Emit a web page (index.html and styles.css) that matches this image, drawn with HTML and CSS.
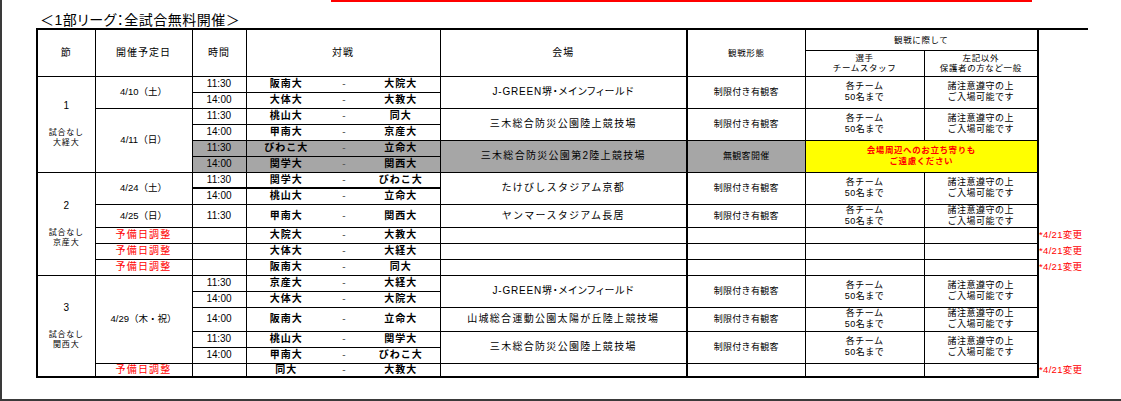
FILE: index.html
```html
<!DOCTYPE html>
<html lang="ja">
<head>
<meta charset="utf-8">
<title>1部リーグ 日程</title>
<link rel="stylesheet" href="styles.css">
</head>
<body>
<div class="page">
  <div class="topline"></div>
  <h1 class="title">＜1部リーグ：全試合無料開催＞</h1>
  <table class="sched">
    <colgroup>
      <col class="k-sec"><col class="k-date"><col class="k-time"><col class="k-t1"><col class="k-dash"><col class="k-t2"><col class="k-venue"><col class="k-view"><col class="k-c7"><col class="k-c8"><col class="k-note">
    </colgroup>
    <thead>
      <tr class="h1">
        <th rowspan="2" class="hd">節</th>
        <th rowspan="2" class="hd">開催予定日</th>
        <th rowspan="2" class="hd">時間</th>
        <th rowspan="2" colspan="3" class="hd">対戦</th>
        <th rowspan="2" class="hd">会場</th>
        <th rowspan="2" class="hs">観戦形態</th>
        <th colspan="2" class="hs">観戦に際して</th>
        <th rowspan="2" class="note"></th>
      </tr>
      <tr class="h2">
        <th class="hs">選手<br>チームスタッフ</th>
        <th class="hs">左記以外<br>保護者の方など一般</th>
      </tr>
    </thead>
    <tbody>
      <tr>
        <td rowspan="6" class="sec"><div class="num">1</div><div class="nog">試合なし<br>大経大</div></td>
        <td rowspan="2" class="date">4/10（土）</td>
        <td class="time">11:30</td><td class="t1">阪南大</td><td class="dash">-</td><td class="t2">大院大</td>
        <td rowspan="2" class="venue jg">J-GREEN堺・メインフィールド</td>
        <td rowspan="2" class="view">制限付き有観客</td>
        <td rowspan="2" class="info">各チーム<br>50名まで</td>
        <td rowspan="2" class="info">諸注意遵守の上<br>ご入場可能です</td>
        <td class="note"></td>
      </tr>
      <tr>
        <td class="time">14:00</td><td class="t1">大体大</td><td class="dash">-</td><td class="t2">大教大</td>
        <td class="note"></td>
      </tr>
      <tr>
        <td rowspan="4" class="date">4/11（日）</td>
        <td class="time">11:30</td><td class="t1">桃山大</td><td class="dash">-</td><td class="t2">同大</td>
        <td rowspan="2" class="venue">三木総合防災公園陸上競技場</td>
        <td rowspan="2" class="view">制限付き有観客</td>
        <td rowspan="2" class="info">各チーム<br>50名まで</td>
        <td rowspan="2" class="info">諸注意遵守の上<br>ご入場可能です</td>
        <td class="note"></td>
      </tr>
      <tr>
        <td class="time">14:00</td><td class="t1">甲南大</td><td class="dash">-</td><td class="t2">京産大</td>
        <td class="note"></td>
      </tr>
      <tr>
        <td class="time g">11:30</td><td class="t1 g">びわこ大</td><td class="dash g">-</td><td class="t2 g">立命大</td>
        <td rowspan="2" class="venue g">三木総合防災公園第2陸上競技場</td>
        <td rowspan="2" class="view g">無観客開催</td>
        <td rowspan="2" colspan="2" class="warn">会場周辺へのお立ち寄りも<br>ご遠慮ください</td>
        <td class="note"></td>
      </tr>
      <tr>
        <td class="time g">14:00</td><td class="t1 g">関学大</td><td class="dash g">-</td><td class="t2 g">関西大</td>
        <td class="note"></td>
      </tr>

      <tr>
        <td rowspan="6" class="sec"><div class="num">2</div><div class="nog">試合なし<br>京産大</div></td>
        <td rowspan="2" class="date">4/24（土）</td>
        <td class="time tb">11:30</td><td class="t1 tb">関学大</td><td class="dash tb">-</td><td class="t2 tb">びわこ大</td>
        <td rowspan="2" class="venue">たけびしスタジアム京都</td>
        <td rowspan="2" class="view">制限付き有観客</td>
        <td rowspan="2" class="info">各チーム<br>50名まで</td>
        <td rowspan="2" class="info">諸注意遵守の上<br>ご入場可能です</td>
        <td class="note"></td>
      </tr>
      <tr>
        <td class="time">14:00</td><td class="t1">桃山大</td><td class="dash">-</td><td class="t2">立命大</td>
        <td class="note"></td>
      </tr>
      <tr class="tall">
        <td class="date">4/25（日）</td>
        <td class="time">11:30</td><td class="t1">甲南大</td><td class="dash">-</td><td class="t2">関西大</td>
        <td class="venue">ヤンマースタジアム長居</td>
        <td class="view">制限付き有観客</td>
        <td class="info">各チーム<br>50名まで</td>
        <td class="info">諸注意遵守の上<br>ご入場可能です</td>
        <td class="note"></td>
      </tr>
      <tr>
        <td class="date red">予備日調整</td>
        <td class="time"></td><td class="t1">大院大</td><td class="dash">-</td><td class="t2">大教大</td>
        <td class="venue"></td><td class="view"></td><td class="info"></td><td class="info"></td>
        <td class="note">*4/21変更</td>
      </tr>
      <tr>
        <td class="date red">予備日調整</td>
        <td class="time"></td><td class="t1">大体大</td><td class="dash">-</td><td class="t2">大経大</td>
        <td class="venue"></td><td class="view"></td><td class="info"></td><td class="info"></td>
        <td class="note">*4/21変更</td>
      </tr>
      <tr>
        <td class="date red">予備日調整</td>
        <td class="time"></td><td class="t1">阪南大</td><td class="dash">-</td><td class="t2">同大</td>
        <td class="venue"></td><td class="view"></td><td class="info"></td><td class="info"></td>
        <td class="note">*4/21変更</td>
      </tr>

      <tr>
        <td rowspan="6" class="sec bb"><div class="num">3</div><div class="nog">試合なし<br>関西大</div></td>
        <td rowspan="5" class="date">4/29（木・祝）</td>
        <td class="time">11:30</td><td class="t1">京産大</td><td class="dash">-</td><td class="t2">大経大</td>
        <td rowspan="2" class="venue jg">J-GREEN堺・メインフィールド</td>
        <td rowspan="2" class="view">制限付き有観客</td>
        <td rowspan="2" class="info">各チーム<br>50名まで</td>
        <td rowspan="2" class="info">諸注意遵守の上<br>ご入場可能です</td>
        <td class="note"></td>
      </tr>
      <tr>
        <td class="time">14:00</td><td class="t1">大体大</td><td class="dash">-</td><td class="t2">大院大</td>
        <td class="note"></td>
      </tr>
      <tr class="taller">
        <td class="time">14:00</td><td class="t1">阪南大</td><td class="dash">-</td><td class="t2">立命大</td>
        <td class="venue">山城総合運動公園太陽が丘陸上競技場</td>
        <td class="view">制限付き有観客</td>
        <td class="info">各チーム<br>50名まで</td>
        <td class="info">諸注意遵守の上<br>ご入場可能です</td>
        <td class="note"></td>
      </tr>
      <tr>
        <td class="time">11:30</td><td class="t1">桃山大</td><td class="dash">-</td><td class="t2">関学大</td>
        <td rowspan="2" class="venue">三木総合防災公園陸上競技場</td>
        <td rowspan="2" class="view">制限付き有観客</td>
        <td rowspan="2" class="info">各チーム<br>50名まで</td>
        <td rowspan="2" class="info">諸注意遵守の上<br>ご入場可能です</td>
        <td class="note"></td>
      </tr>
      <tr>
        <td class="time">14:00</td><td class="t1">甲南大</td><td class="dash">-</td><td class="t2">びわこ大</td>
        <td class="note"></td>
      </tr>
      <tr class="last">
        <td class="date red">予備日調整</td>
        <td class="time"></td><td class="t1">同大</td><td class="dash">-</td><td class="t2">大教大</td>
        <td class="venue"></td><td class="view"></td><td class="info"></td><td class="info"></td>
        <td class="note">*4/21変更</td>
      </tr>
    </tbody>
  </table>
</div>
</body>
</html>
```

FILE: styles.css
```css
html, body {
  margin: 0;
  padding: 0;
}
body {
  background: #3a3a3a;
  font-family: "Liberation Sans", "Noto Sans CJK JP", sans-serif;
  color: #000;
}
.page {
  margin-left: 2px;
  height: 399px;
  background: #fff;
  overflow: hidden;
}
.topline {
  margin-left: 329px;
  width: 701px;
  height: 2px;
  background: #ff0000;
}
.title {
  margin: 10px 0 0 38px;
  font-size: 14px;
  line-height: 16px;
  font-weight: normal;
  color: #000;
  font-feature-settings: "palt";
  letter-spacing: 0.5px;
}
.sched {
  margin-left: 34px;
  border-collapse: collapse;
  table-layout: fixed;
  width: 1051px;
}
.k-sec { width: 58px; border-left: 2px solid #000; }
.k-date { width: 97px; }
.k-time { width: 54px; }
.k-t1 { width: 80px; }
.k-dash { width: 36px; }
.k-t2 { width: 78px; }
.k-venue { width: 247px; border-right: 2px solid #000; }
.k-view { width: 118px; }
.k-c7 { width: 119px; }
.k-c8 { width: 114px; border-right: 2px solid #000; }
.k-note { width: 50px; }

.sched th, .sched td {
  border: 1px solid #000;
  padding: 0;
  text-align: center;
  vertical-align: middle;
  font-weight: normal;
  white-space: nowrap;
  overflow: hidden;
}
.sched .h1 th { border-top: 2px solid #000; }
.sched .h1 { height: 21px; }
.sched .h2 { height: 26px; }
.sched tbody tr { height: 16px; }
.sched tbody tr.tall { height: 23px; }
.sched tbody tr.taller { height: 24px; }
.sched tbody tr.last { height: 14px; }

.hd {
  font-size: 10px;
  letter-spacing: 1px;
  line-height: 12px;
}
.hs {
  font-size: 8.5px;
  letter-spacing: 0.6px;
  line-height: 10px;
}
.sec {
  font-size: 8px;
}
.sec .num {
  font-size: 10px;
  line-height: 12px;
  margin-bottom: 16px;
}
.sec .nog {
  font-size: 8px;
  line-height: 10px;
  letter-spacing: 0.8px;
}
.date {
  font-size: 9.5px;
  line-height: 12px;
}
.sched .red { color: #ff0000; font-size: 10px; letter-spacing: 1.2px; }
.time {
  font-size: 10px;
  line-height: 12px;
}
.sched .t1, .sched .t2 {
  font-size: 10px;
  line-height: 12px;
  font-weight: bold;
  letter-spacing: 1px;
}
.sched .t1 { border-right: none; }
.sched .t2 { border-left: none; }
.sched .dash {
  border-left: none;
  border-right: none;
  font-size: 10px;
  line-height: 12px;
  color: #555;
}
.sched .tb { border-bottom: 2px solid #000; }
.venue {
  font-size: 10px;
  line-height: 12px;
  letter-spacing: 1.3px;
}
.sched .jg {
  font-feature-settings: "palt";
  letter-spacing: 0.8px;
}
.view {
  font-size: 9px;
  line-height: 10px;
  letter-spacing: 0.3px;
}
.info {
  font-size: 9px;
  line-height: 11px;
  letter-spacing: 0.5px;
}
.g { background: #a6a6a6; }
.sched .warn {
  background: #ffff00;
  color: #ff0000;
  font-weight: bold;
  font-size: 8.5px;
  line-height: 11px;
  letter-spacing: 0.6px;
}
.sched .note {
  border: none;
  text-align: left;
  padding-left: 0;
  color: #ff0000;
  font-size: 9.5px;
  line-height: 10px;
  letter-spacing: 0.3px;
}
.sched .last td { border-bottom: 2px solid #000; }
.sched .last td.note { border-bottom: none; }
.sched .bb { border-bottom: 2px solid #000; }
```
